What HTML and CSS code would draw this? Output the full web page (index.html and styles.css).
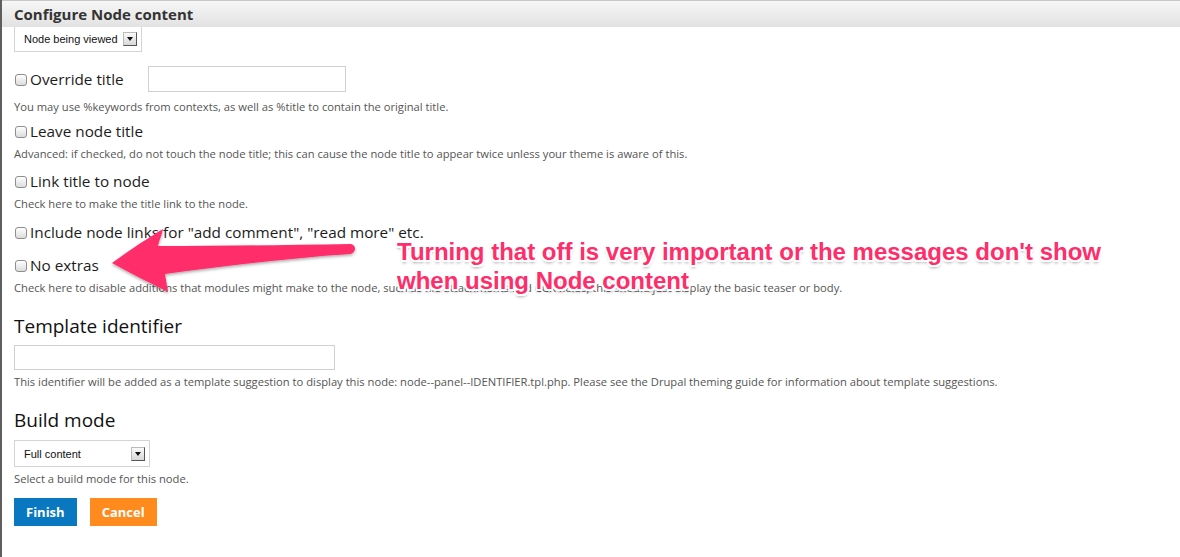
FILE: index.html
```html
<!DOCTYPE html>
<html>
<head>
<meta charset="utf-8">
<link rel="stylesheet" href="styles.css">
</head>
<body>
<div class="page">
  <div class="titlebar">Configure Node content</div>
  <div class="content">
    <div class="fake-select select-context">
      <span class="select-text">Node being viewed</span>
      <span class="select-arrow"></span>
    </div>

    <div class="check-row override-row">
      <label class="check-label"><span class="checkbox"></span>Override title</label>
      <span class="text-input override-input"></span>
    </div>
    <div class="description desc-override">You may use %keywords from contexts, as well as %title to contain the original title.</div>

    <div class="check-row row-leave"><label class="check-label"><span class="checkbox"></span>Leave node title</label></div>
    <div class="description">Advanced: if checked, do not touch the node title; this can cause the node title to appear twice unless your theme is aware of this.</div>

    <div class="check-row"><label class="check-label"><span class="checkbox"></span>Link title to node</label></div>
    <div class="description">Check here to make the title link to the node.</div>

    <div class="check-row row-links"><label class="check-label"><span class="checkbox"></span>Include node links for "add comment", "read more" etc.</label></div>

    <div class="check-row row-extras"><label class="check-label"><span class="checkbox"></span>No extras</label></div>
    <div class="description desc-extras">Check here to disable additions that modules might make to the node, such as file attachments and CCK fields; this should just display the basic teaser or body.</div>

    <h2 class="section-title">Template identifier</h2>
    <div class="text-input template-input"></div>
    <div class="description desc-section">This identifier will be added as a template suggestion to display this node: node--panel--IDENTIFIER.tpl.php. Please see the Drupal theming guide for information about template suggestions.</div>

    <h2 class="section-title">Build mode</h2>
    <div class="fake-select select-build">
      <span class="select-text">Full content</span>
      <span class="select-arrow"></span>
    </div>
    <div class="description desc-section">Select a build mode for this node.</div>

    <div class="buttons">
      <span class="btn btn-finish">Finish</span>
      <span class="btn btn-cancel">Cancel</span>
    </div>
  </div>

  <svg class="arrow" width="1180" height="557" viewBox="0 0 1180 557">
    <defs>
      <filter id="sh" x="-10%" y="-10%" width="120%" height="130%">
        <feDropShadow dx="0" dy="1.5" stdDeviation="1.5" flood-color="#000" flood-opacity="0.35"/>
      </filter>
    </defs>
    <path filter="url(#sh)" fill="#ff2d6a" d="M112 263 C130 250 148 238 163 229 C162 235 159 240 158 246 C220 246 290 245 351 244 C356 245 357 252 350 254 C290 258 225 266 165 274 C166 280 167 286 168 292 C150 283 130 273 112 263 Z"/>
  </svg>
  <div class="annotation">Turning that off is very important or the messages don't show<br>when using Node content</div>
</div>
</body>
</html>
```

FILE: styles.css
```css
html, body {
  margin: 0;
  padding: 0;
  background: #fff;
}

.page {
  position: relative;
  width: 1178px;
  height: 557px;
  border-left: 2px solid #5e5e5e;
  overflow: hidden;
  font-family: "Open Sans", "DejaVu Sans", sans-serif;
  color: #222;
}

.titlebar {
  height: 26px;
  border-top: 1px solid #c8c8c8;
  background: linear-gradient(#f6f6f6, #e2e2e2);
  padding-left: 12px;
  font-weight: 700;
  font-size: 15px;
  line-height: 26px;
  color: #333;
}

.content {
  padding-left: 12px;
}

.fake-select {
  display: flex;
  align-items: center;
  justify-content: space-between;
  box-sizing: border-box;
  border: 1px solid #d4d4d4;
  font-family: "Liberation Sans", Arial, sans-serif;
  font-size: 11px;
  color: #111;
  background: #fff;
}

.select-context {
  width: 128px;
  height: 25px;
  border-top: none;
  padding: 0 4px 0 9px;
}

.select-build {
  width: 136px;
  height: 27px;
  margin-top: 7px;
  padding: 0 4px 0 9px;
}

.select-arrow {
  position: relative;
  width: 14px;
  height: 14px;
  box-sizing: border-box;
  border: 1px solid #bbb;
  border-right-color: #555;
  border-bottom-color: #555;
  background: linear-gradient(#fafafa, #d8d8d8);
}

.select-arrow::after {
  content: "";
  position: absolute;
  left: 3px;
  top: 4px;
  border-left: 3.5px solid transparent;
  border-right: 3.5px solid transparent;
  border-top: 4px solid #111;
}

.check-row {
  display: flex;
  align-items: center;
  margin-top: 9px;
}

.override-row {
  margin-top: 14px;
}

.row-leave {
  margin-top: 6px;
}

.row-links {
  margin-top: 10px;
}

.row-extras {
  margin-top: 13px;
}

.check-label {
  display: flex;
  align-items: center;
  font-size: 15.3px;
  line-height: 20px;
  color: #1c1c1c;
}

.checkbox {
  display: inline-block;
  width: 12px;
  height: 12px;
  margin: 2px 3px 0 1px;
  border: 1px solid #8e8e8e;
  border-radius: 3px;
  background: linear-gradient(#ffffff, #dcdcdc);
  box-sizing: border-box;
}

.text-input {
  display: block;
  box-sizing: border-box;
  border: 1px solid #d0d0d0;
  background: #fff;
}

.override-input {
  width: 198px;
  height: 26px;
  margin-left: 24px;
}

.template-input {
  width: 321px;
  height: 25px;
  margin-top: 6px;
}

.description {
  font-size: 11.2px;
  line-height: 16px;
  color: #555;
  margin-top: 5px;
}

.desc-override {
  margin-top: 7px;
}

.desc-extras {
  margin-top: 5px;
}

.desc-section {
  margin-top: 4px;
}

.section-title {
  margin: 17px 0 0;
  font-size: 19px;
  font-weight: 400;
  line-height: 26px;
  color: #111;
}

.buttons {
  display: flex;
  gap: 13px;
  margin-top: 11px;
}

.btn {
  display: inline-block;
  height: 28px;
  line-height: 28px;
  padding: 0 12px;
  font-size: 13px;
  font-weight: 700;
  color: #fff;
}

.btn-finish {
  background: #0a78c0;
}

.btn-cancel {
  background: #ff8a1e;
}

.arrow {
  position: absolute;
  left: -2px;
  top: 0;
}

.annotation {
  position: absolute;
  left: 395px;
  top: 237px;
  font-family: "Liberation Sans", Arial, sans-serif;
  font-weight: 700;
  font-size: 24px;
  line-height: 29px;
  color: #ff2d6a;
  white-space: nowrap;
  text-shadow:
    -2px 0 0 #fff, 2px 0 0 #fff, 0 -2px 0 #fff, 0 2px 0 #fff,
    -1.5px -1.5px 0 #fff, 1.5px -1.5px 0 #fff, -1.5px 1.5px 0 #fff, 1.5px 1.5px 0 #fff,
    0 3px 3px rgba(0,0,0,0.35);
}
```
